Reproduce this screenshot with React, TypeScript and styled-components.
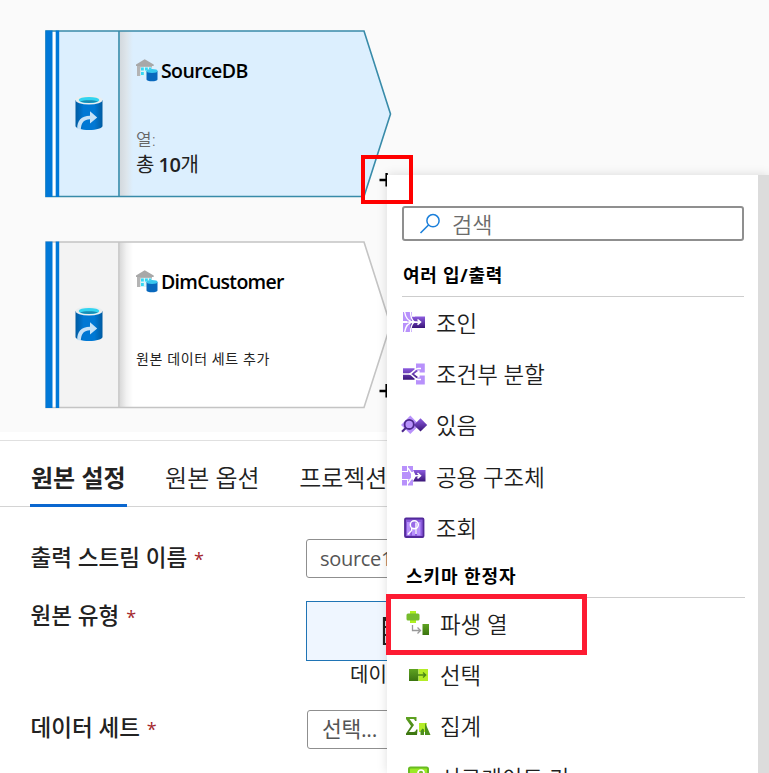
import React from "react";
import styled, { createGlobalStyle, css } from "styled-components";

const Global = createGlobalStyle`
  * { box-sizing: border-box; }
  html, body { margin: 0; padding: 0; overflow: hidden; }
  body { font-family: "Open Sans", "Noto Sans CJK KR", sans-serif; color: #222; background: #fff; }
`;

const Page = styled.div`
  position: relative;
  width: 769px;
  height: 773px;
  overflow: hidden;
  display: flex;
  flex-direction: column;
  background: #fff;
`;

const Canvas = styled.section`
  position: relative;
  flex: none;
  height: 432px;
  background: #fafafa;
`;

const NodeBox = styled.article<{ $top: number }>`
  position: absolute;
  left: 45px;
  top: ${(p) => p.$top}px;
  width: 348px;
  height: 168px;
  display: flex;
`;

const NodeShape = styled.svg`
  position: absolute;
  inset: 0;
`;

const NodeRail = styled.div`
  position: relative;
  width: 75px;
  padding: 0 2px 3px 14px;
  display: flex;
  align-items: center;
  justify-content: center;
`;

const NodeBody = styled.div`
  position: relative;
  padding: 26px 0 0 16px;
  display: flex;
  flex-direction: column;
`;

const NodeTitle = styled.div<{ $track?: number }>`
  display: flex;
  align-items: center;
  gap: 3px;
  height: 28px;
  font-size: 19.5px;
  font-weight: 650;
  color: #000;
  white-space: nowrap;
  letter-spacing: ${(p) => p.$track ?? 0}px;
`;

const ColumnLabel = styled.div`
  margin-top: 45px;
  height: 22px;
  line-height: 22px;
  font-size: 17px;
  font-weight: 350;
  color: #666;
`;

const ColumnCount = styled.div`
  height: 27px;
  line-height: 27px;
  font-size: 20px;
  letter-spacing: -0.5px;
  white-space: nowrap;
  color: #222;
  b { font-weight: 650; }
`;

const NodeNote = styled.div`
  margin-top: 52px;
  height: 24px;
  line-height: 24px;
  font-size: 14px;
  white-space: nowrap;
  letter-spacing: 0.6px;
  color: #222;
`;

const AddMark = styled.svg<{ $top: number }>`
  position: absolute;
  left: 379px;
  top: ${(p) => p.$top}px;
`;

const Properties = styled.section`
  margin-top: 8px;
  border-top: 1px solid #e0e0e0;
  flex: 1;
  display: flex;
  flex-direction: column;
`;

const Tabs = styled.nav`
  display: flex;
  height: 66px;
  padding-left: 30px;
  border-bottom: 1px solid #d4d4d4;
  flex: none;
`;

const Tab = styled.div<{ $active?: boolean }>`
  height: 66px;
  padding: 0 1px;
  margin-right: 37.5px;
  line-height: 74px;
  font-size: 24px;
  white-space: nowrap;
  font-weight: ${(p) => (p.$active ? 700 : 350)};
  border-bottom: ${(p) => (p.$active ? "3px solid #0b67cf" : "none")};
`;

const Form = styled.div`
  display: grid;
  grid-template-columns: 275.5px 1fr;
  grid-template-rows: 62px 109px 60px;
  padding: 32px 0 0 30.5px;
`;

const Label = styled.label<{ $shift?: number }>`
  margin-top: ${(p) => p.$shift ?? 0}px;
  height: 38px;
  line-height: 38px;
  font-size: 22.5px;
  font-weight: 500;
  white-space: nowrap;
  i { margin-left: 7px; font-style: normal; font-weight: 400; font-size: 18px; color: #a4262c; }
`;

const Field = styled.div<{ $indent?: number }>`
  height: 39px;
  width: 220px;
  margin-left: ${(p) => p.$indent ?? 0}px;
  padding-left: ${(p) => (p.$indent ? 14 : 13)}px;
  border: 1px solid #8f8f8f;
  border-radius: 3px;
  line-height: ${(p) => (p.$indent ? 36 : 38)}px;
  font-size: ${(p) => (p.$indent ? 21.5 : 20)}px;
  letter-spacing: -0.3px;
  color: #555;
  white-space: nowrap;
`;

const TypeCell = styled.div`
  display: flex;
  flex-direction: column;
`;

const TypeCard = styled.div`
  width: 180px;
  height: 60px;
  padding-left: 75px;
  display: flex;
  align-items: center;
  border: 1px solid #1f74b5;
  background: #eff6ff;
`;

const TypeName = styled.div`
  height: 28px;
  line-height: 27px;
  padding-left: 44px;
  font-size: 20px;
  color: #222;
`;

const Menu = styled.aside`
  position: absolute;
  left: 387px;
  top: 175px;
  width: 371px;
  height: 598px;
  padding: 31px 14px 0 15px;
  overflow: hidden;
  background: #fff;
`;

const MenuShade = styled.div`
  position: absolute;
  left: 387px;
  top: 175px;
  width: 382px;
  height: 598px;
  box-shadow: 0 0 10px rgba(0, 0, 0, 0.13);
`;

const ScrollTrack = styled.div`
  position: absolute;
  left: 758px;
  top: 175px;
  width: 11px;
  height: 598px;
  background: #dcdcdc;
`;

const Search = styled.div`
  height: 35px;
  border: 2px solid #8f8f8f;
  border-radius: 3px;
  display: flex;
  align-items: center;
  gap: 11px;
  padding: 0 0 2px 15px;
  font-size: 22px;
  font-weight: 350;
  color: #6c6c6c;
  svg { position: relative; top: 1px; }
`;

const GroupTitle = styled.h3<{ $second?: boolean }>`
  margin: 0;
  font-size: 18px;
  font-weight: 700;
  color: #000;
  white-space: nowrap;
  border-bottom: 1px solid #cdcdcd;
  ${(p) =>
    p.$second
      ? css`height: 44px; line-height: 44px; margin: 0 -1px 0 3px; padding-left: 1px; letter-spacing: 0.9px;`
      : css`height: 56px; padding: 14px 0 0 1px; line-height: 40px; letter-spacing: 0.75px;`}
`;

const MenuList = styled.ul<{ $indent?: number }>`
  list-style: none;
  margin: 0;
  padding: 0 0 0 ${(p) => p.$indent ?? 0}px;
`;

const MenuItem = styled.li`
  display: flex;
  align-items: center;
  gap: 10px;
  height: 51.4px;
  padding-bottom: 1px;
  font-size: 22.4px;
  font-weight: 350;
  white-space: nowrap;
  color: #1e1e1e;
  svg { flex: none; }
`;

const IconSlot = styled.span`
  width: 24px;
  display: flex;
  justify-content: center;
`;

const Callout = styled.div<{ $kind: "add" | "row" }>`
  position: absolute;
  ${(p) =>
    p.$kind === "add"
      ? css`left: 361px; top: 155px; width: 52px; height: 49px; border: 4px solid #ff0000;`
      : css`left: 386px; top: 594px; width: 201px; height: 61px; border: 5px solid #fd1b32;`}
`;

const GradientStore = styled.svg`
  display: block;
`;

const SourceIcon = () => (
  <svg width="30" height="36" viewBox="0 0 30 36">
    <defs>
      <linearGradient id="barrel">
        <stop offset="0" stopColor="#005ba1" />
        <stop offset=".3" stopColor="#0078d4" />
        <stop offset=".7" stopColor="#0078d4" />
        <stop offset="1" stopColor="#005ba1" />
      </linearGradient>
    </defs>
    <path d="M1.500 5v26c0 2.200 6 4 13.500 4s13.500-1.800 13.500-4V5z" fill="url(#barrel)" />
    <ellipse cx="15" cy="5" rx="13.500" ry="4.500" fill="#e9eef0" />
    <ellipse cx="15" cy="5" rx="10.300" ry="3.100" fill="#32d4f0" />
    <path d="M6 6.600c4-1.800 14-1.800 18 0-4 1.800-14 1.800-18 0z" fill="#198ab3" />
    <path d="M3.200 34c-.2-8 4-13.200 12.800-13.200v-4.600l7.200 6.300-7.200 6v-4.300c-6 0-8.800 3.500-9.200 10.300z" fill="#c7e2f7" />
  </svg>
);

const DatabaseIcon = () => (
  <svg width="22" height="23" viewBox="0 0 22 23">
    <path d="M0 5.500 8.700.3l9 5.200V7H0z" fill="#a8a8a8" />
    <path d="M1 7h15v2.500H4.500V17H1z" fill="#b4b4b4" />
    <path d="M4.500 8h11v9h-11z" fill="#d8f3f8" />
    <path d="M5 8.500h2.800v3H5zM9 8.500h2.800v3H9zM13 8.500h2.300v2H13zM5 13h2.800v3H5z" fill="#36d8f4" />
    <path d="M10.500 12v8.500c0 1 2.500 1.800 5.500 1.800s5.500-.8 5.500-1.800V12z" fill="#0868bd" />
    <ellipse cx="16" cy="12" rx="5.500" ry="1.900" fill="#38c7ee" />
  </svg>
);

const Defs = () => (
  <GradientStore width="0" height="0">
    <defs>
      <linearGradient id="violet" x1="0" y1="0" x2="0" y2="1">
        <stop offset="0" stopColor="#8d5ce0" />
        <stop offset="1" stopColor="#391477" />
      </linearGradient>
      <linearGradient id="leaf" x1="0" y1="0" x2="0" y2="1">
        <stop offset="0" stopColor="#5fa321" />
        <stop offset="1" stopColor="#3b7410" />
      </linearGradient>
    </defs>
  </GradientStore>
);

const JoinIcon = () => (
  <svg width="24" height="24" viewBox="0 0 24 24">
    <path d="M1 2h9v4l4 5v3l-4 4v4H1v-9h4v-2H1z" fill="#b891fb" />
    <path d="M10 6.500h13V18H8z" fill="url(#violet)" />
    <path d="M10 1v5.500h3V1zM10 18h3v5h-3z" fill="#fff" />
    <path d="M2.500 1.500c1 6.500 4 10 9 10.600-5 .4-8 4-9 10.400M0 12.100h9M8.500 1c0 6 1 9 4 11-3 2-4 5-4 11" stroke="#fff" strokeWidth="1.400" fill="none" />
    <path d="M9 12.100h9M15.500 9.500l3 2.600-3 2.600" stroke="#fff" strokeWidth="1.600" fill="none" />
  </svg>
);

const SplitIcon = () => (
  <svg width="24" height="24" viewBox="0 0 24 24">
    <path d="M14 1.500h8.800v9h-5.200V8.500h-2.800l-4 3.500 4 3.500h2.800v-2h5.200v9H14v-5l-5-5.500 5-5.500z" fill="#b891fb" />
    <path d="M1 6.300h11l4 2.700-4 3 4 3-4 2.700H1z" fill="url(#violet)" />
    <path d="M1 12h6c4 0 5-5.500 9-5.500h3M7 12c4 0 5 5.500 9 5.500h3" stroke="#fff" strokeWidth="1.700" fill="none" />
  </svg>
);

const ExistsIcon = () => (
  <svg width="28" height="24" viewBox="0 0 28 24">
    <path d="M10.300 2.500 19.500 12l-9.200 9L1 12z" fill="#b891fb" />
    <path d="m20.500 5.200 6.700 6.700-6.700 6.600-6.600-6.600z" fill="url(#violet)" />
    <circle cx="9.200" cy="11.400" r="4.600" fill="none" stroke="#4b278c" strokeWidth="1.800" />
    <path d="m6 14.700-4 4" stroke="#4b278c" strokeWidth="2.200" />
  </svg>
);

const UnionIcon = () => (
  <svg width="24" height="24" viewBox="0 0 24 24">
    <path d="M0 2h5v5H0zM6 2h5v6H6zM0 8h9v7H0zM0 16h5v5.500H0zM6 15.500h5v6H6z" fill="#b891fb" />
    <path d="M11 6h12.500v11.500H11l3-5.500z" fill="url(#violet)" />
    <path d="M5.500 4C8 5 9 11.700 13 11.700h5M5.500 19.500c2.500-1 3.500-7.800 7.500-7.800M15.500 9l3 2.700-3 2.700" stroke="#fff" strokeWidth="1.500" fill="none" />
  </svg>
);

const LookupIcon = () => (
  <svg width="24" height="24" viewBox="0 0 24 24">
    <rect x="3" y="2.500" width="18.500" height="18.500" rx="1" fill="#8b5bdc" stroke="#52299a" strokeWidth="1.800" />
    <path d="M5 19.500V6h3.200v13.500M10 19.500V11h3v8.500M15 19.500V6h3.500v13.500" fill="#b891fb" />
    <circle cx="12.300" cy="8.800" r="4" fill="#a274ef" fillOpacity=".6" stroke="#fff" strokeWidth="1.500" />
    <path d="M9.600 12v2.500l-3.800 4M14 6.500V18" stroke="#fff" strokeWidth="1.400" fill="none" />
  </svg>
);

const DerivedIcon = () => (
  <svg width="24" height="26" viewBox="0 0 24 26">
    <path d="M4 1h6v12H4z" fill="#aef020" />
    <path d="M2 3.500h10a1.500 1.500 0 0 1 1.500 1.500v4A1.500 1.500 0 0 1 12 10.500H2A1.500 1.500 0 0 1 .5 9V5A1.500 1.500 0 0 1 2 3.500z" fill="#76bc2d" />
    <rect x="16.500" y="14" width="6.500" height="11" fill="url(#leaf)" />
    <path d="M6.500 15v5.500h7M11.500 17.500l3 3-3 3" stroke="#999" strokeWidth="1.300" fill="none" />
  </svg>
);

const SelectIcon = () => (
  <svg width="24" height="24" viewBox="0 0 24 24">
    <rect x="3" y="6" width="9.500" height="12" fill="url(#leaf)" />
    <rect x="12.500" y="6" width="9.500" height="12" fill="#b4ed27" />
    <path d="M12 12h8M17 9.500l2.700 2.500-2.700 2.500" stroke="#4c8818" strokeWidth="1.300" fill="none" />
  </svg>
);

const AggregateIcon = () => (
  <svg width="25" height="24" viewBox="0 0 25 24">
    <path d="M0 3h10.500v4H9c-.2-1.500-1-2-2.500-2h-3L8 11l-5 7h4.500c1.500 0 2.300-.8 2.700-2.500h1.400L11 21H0v-1.500L5 12 0 5z" fill="url(#leaf)" />
    <path d="M13 9h8l-.8 4.500V18H13z" fill="#b4ed27" />
    <path d="M14.500 21v-4l2-2.500 1.500 1v5.500zM19 8.500l5.500 12.500H19z" fill="#4c8f1c" />
  </svg>
);

const KeyIcon = () => (
  <svg width="24" height="24" viewBox="0 0 24 24">
    <rect x="3" y="2.500" width="19" height="19" rx="1.500" fill="#9bea25" stroke="#68bb22" strokeWidth="2" />
    <circle cx="15" cy="8" r="3" fill="#76bc2d" stroke="#fff" strokeWidth="1.700" />
    <path d="m13 10-7 8" stroke="#fff" strokeWidth="2" />
  </svg>
);

const TableIcon = () => (
  <svg width="30" height="30" viewBox="0 0 30 30">
    <path d="M2 2h26v26H2zM2 4h26M2 11h26M2 19h26M11 4v24M20 4v24" stroke="#222" strokeWidth="2.200" fill="none" />
  </svg>
);

const SearchIcon = () => (
  <svg width="22" height="22" viewBox="0 0 22 22">
    <circle cx="14" cy="7.700" r="6.100" stroke="#1b7fda" strokeWidth="1.500" fill="none" />
    <path d="m9.500 12-8 8" stroke="#1b7fda" strokeWidth="1.600" />
  </svg>
);

type FlowNodeProps = {
  top: number;
  title: string;
  track?: number;
  selected?: boolean;
  children: React.ReactNode;
};

function FlowNode({ top, title, track, selected, children }: FlowNodeProps) {
  const line = selected ? "#388ba9" : "#c4c4c4";
  const id = selected ? "fold-selected" : "fold";
  return (
    <NodeBox $top={top}>
      <NodeShape width="348" height="168" viewBox="0 0 348 168">
        <defs>
          <linearGradient id={id}>
            <stop offset="0" stopColor={selected ? "#d3d9de" : "#dadada"} />
            <stop offset=".5" stopColor={selected ? "#dde5eb" : "#f2f2f2"} />
            <stop offset="1" stopColor={selected ? "#dceffe" : "#fff"} />
          </linearGradient>
        </defs>
        <path d="M1 1h318l26.500 83L319 166.500H1z" fill={selected ? "#dceffe" : "#fff"} />
        {!selected && <path d="M14 1h60v165.500H14z" fill="#f3f3f3" />}
        <path d="M75 1h13v165.500H75z" fill={`url(#${id})`} />
        <path d="M74 1v165.500M1 1h318l26.500 83L319 166.500H1z" fill="none" stroke={line} strokeWidth="1.600" />
        <path d="M7 2h4v163.500H7z" fill="#fff" />
        <path d="M.5.500H7.500v166.500H.5zM10.700.500h3.500v166.500h-3.500z" fill="#0078d7" />
      </NodeShape>
      <NodeRail><SourceIcon /></NodeRail>
      <NodeBody>
        <NodeTitle $track={track}><DatabaseIcon />{title}</NodeTitle>
        {children}
      </NodeBody>
    </NodeBox>
  );
}

const Plus = ({ top }: { top: number }) => (
  <AddMark $top={top} width="16" height="16" viewBox="0 0 16 16">
    <path d="M.500 8h14M7.600 1v13.500" stroke="#000" strokeWidth="2.400" />
  </AddMark>
);

const multiItems = [
  { icon: <JoinIcon />, text: "조인" },
  { icon: <SplitIcon />, text: "조건부 분할" },
  { icon: <ExistsIcon />, text: "있음" },
  { icon: <UnionIcon />, text: "공용 구조체" },
  { icon: <LookupIcon />, text: "조회" },
];

const schemaItems = [
  { icon: <DerivedIcon />, text: "파생 열" },
  { icon: <SelectIcon />, text: "선택" },
  { icon: <AggregateIcon />, text: "집계" },
  { icon: <KeyIcon />, text: "서로게이트 키" },
];

export default function App() {
  return (
    <Page>
      <Global />
      <Canvas>
        <FlowNode top={30} title="SourceDB" track={-0.6} selected>
          <ColumnLabel>열:</ColumnLabel>
          <ColumnCount>총 <b>10</b>개</ColumnCount>
        </FlowNode>
        <FlowNode top={241} title="DimCustomer" track={-0.7}>
          <NodeNote>원본 데이터 세트 추가</NodeNote>
        </FlowNode>
        <Plus top={172} />
        <Plus top={383} />
      </Canvas>
      <Properties>
        <Tabs>
          <Tab $active>원본 설정</Tab>
          <Tab>원본 옵션</Tab>
          <Tab>프로젝션</Tab>
        </Tabs>
        <Form>
          <Label>출력 스트림 이름<i>*</i></Label>
          <Field>source1</Field>
          <Label $shift={-4}>원본 유형<i>*</i></Label>
          <TypeCell>
            <TypeCard><TableIcon /></TypeCard>
            <TypeName>데이</TypeName>
          </TypeCell>
          <Label $shift={-1}>데이터 세트<i>*</i></Label>
          <Field $indent={1}>선택...</Field>
        </Form>
      </Properties>
      <MenuShade />
      <Menu>
        <Defs />
        <Search><SearchIcon />검색</Search>
        <GroupTitle>여러 입/출력</GroupTitle>
        <MenuList>
          {multiItems.map((m) => (
            <MenuItem key={m.text}><IconSlot>{m.icon}</IconSlot>{m.text}</MenuItem>
          ))}
        </MenuList>
        <GroupTitle $second>스키마 한정자</GroupTitle>
        <MenuList $indent={4}>
          {schemaItems.map((m) => (
            <MenuItem key={m.text}><IconSlot>{m.icon}</IconSlot>{m.text}</MenuItem>
          ))}
        </MenuList>
      </Menu>
      <ScrollTrack />
      <Callout $kind="add" />
      <Callout $kind="row" />
    </Page>
  );
}
